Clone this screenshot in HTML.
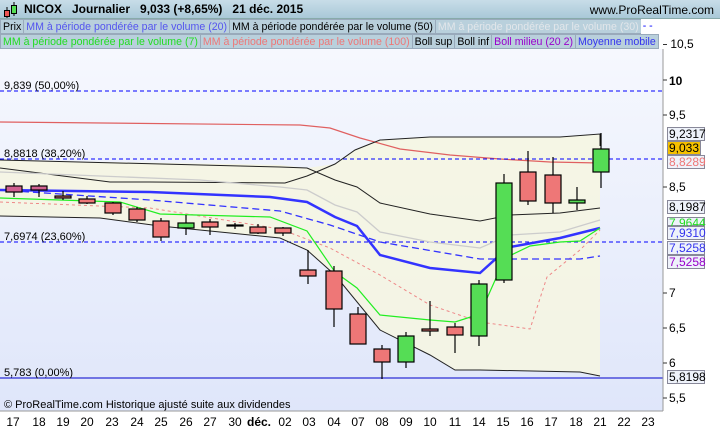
<!DOCTYPE html>
<html><head><meta charset="utf-8"><style>
body{margin:0;width:720px;height:430px;overflow:hidden;font-family:"Liberation Sans",sans-serif;background:#fff;position:relative}
.t{position:absolute;left:0;top:0;width:720px;height:18px;background:linear-gradient(#c8dde8,#a9c8d8);border-bottom:1px solid #8aa}
.row{position:absolute;left:0;height:15px;font-size:10.6px;line-height:14px;white-space:nowrap;display:flex;overflow:hidden}
.row span{flex:none;display:block;background:#b9d0dc;border:1px solid #9ab;padding:0 2px;margin-right:-1px}
</style></head><body>
<div class="t"><span style="position:absolute;left:24px;top:2px;font-size:12px;font-weight:bold">NICOX &nbsp; Journalier &nbsp; 9,033 (+8,65%) &nbsp; 21 déc. 2015</span><span style="position:absolute;right:6px;top:3px;font-size:12px">www.ProRealTime.com</span>
<svg style="position:absolute;left:3px;top:2px" width="16" height="16"><line x1="4" y1="5" x2="4" y2="16" stroke="#000"/><rect x="1.5" y="8.5" width="5" height="6" fill="#e55" stroke="#000"/><line x1="11" y1="0" x2="11" y2="14" stroke="#000"/><rect x="8.5" y="3.5" width="5" height="8" fill="#5d5" stroke="#000"/></svg></div>
<div class="row" style="top:19px;background:#fff;width:664px"><span>Prix</span><span style="color:#55e">MM à période pondérée par le volume (20)</span><span>MM à période pondérée par le volume (50)</span><span style="color:#e2e6ea">MM à période pondérée par le volume (30)</span><span style="color:#00f;background:#fff;border:none">- -</span></div>
<div class="row" style="top:34px;background:#fff;width:664px"><span style="color:#2d2">MM à période pondérée par le volume (7)</span><span style="color:#e77">MM à période pondérée par le volume (100)</span><span>Boll sup</span><span>Boll inf</span><span style="color:#90c">Boll milieu (20 2)</span><span style="color:#33e">Moyenne mobile</span></div>
<div style="position:absolute;left:663px;top:37px;font-size:12px"><span style="display:inline-block;width:4px;height:1px;background:#333;vertical-align:middle"></span> 10,5</div>
<svg style="position:absolute;left:0;top:49px" width="720" height="381" viewBox="0 49 720 381" font-family="Liberation Sans" font-size="11">
<defs><linearGradient id="bg" x1="0" y1="0" x2="0" y2="1"><stop offset="0" stop-color="#f6f8fe"/><stop offset="1" stop-color="#dfe6fa"/></linearGradient></defs>
<rect x="0" y="49" width="663" height="362" fill="url(#bg)"/>
<polygon fill="#f6f6e0" opacity=".85" points="0,160 280,165 307,168 335,164 355,150 380,140 430,137 480,137 560,137 600,134 600,376 580,372 480,370 455,370 430,355 380,330 335,275 307,250 280,238 160,226 100,218 0,216"/>
<g fill="none">
<polyline stroke="#e06060" stroke-width="1.2" points="0,122 300,125 330,128 360,138 400,149 450,155 500,159 550,162 600,163"/>
<line x1="0" y1="91" x2="663" y2="91" stroke="#00f" stroke-dasharray="4,3"/>
<line x1="0" y1="159" x2="663" y2="159" stroke="#00f" stroke-dasharray="4,3"/>
<line x1="0" y1="242" x2="663" y2="242" stroke="#00f" stroke-dasharray="4,3"/>
<line x1="0" y1="378" x2="663" y2="378" stroke="#00c"/>
<polyline stroke="#222" points="0,160 280,167 307,168 335,180 357,187 380,203 430,214 480,221 510,215 560,213 600,208"/>
<polyline stroke="#222" points="0,168 110,182 150,182 285,183 307,176 335,164 355,150 380,140 430,137 480,137 560,137 600,134 600,146"/>
<polyline stroke="#222" points="0,216 100,218 160,226 280,238 307,250 335,275 380,330 430,355 455,370 480,370 580,372 600,376"/>
<polyline stroke="#ccc" stroke-width="1.3" points="0,172 200,180 280,187 307,190 335,205 357,212 380,232 430,242 480,248 510,235 560,232 600,220"/>
<polyline stroke="#e88" stroke-dasharray="3,3" points="0,202 150,208 280,229 330,248 380,275 430,305 480,322 530,329 547,277 580,250 600,230"/>
<polyline stroke="#33f" stroke-width="1.3" stroke-dasharray="7,4" points="0,190 150,200 280,211 330,225 380,242 480,259 580,259 600,256"/>
<polyline stroke="#33f" stroke-width="2.5" points="0,190 150,192 270,197 307,202 335,217 357,226 380,255 430,268 480,273 500,255 510,247 560,238 600,228"/>
<polyline stroke="#2e2" stroke-width="1.2" points="0,198 120,202 160,214 270,217 307,231 335,272 357,288 380,315 430,320 455,322 480,314 505,258 530,246 560,242 580,241 600,228"/>
</g>
<g stroke="#000" stroke-width="1.2">
<line x1="14" y1="183" x2="14" y2="197"/><rect x="6" y="186" width="16" height="6" fill="#d06090"/>
<line x1="39" y1="184" x2="39" y2="197"/><rect x="31" y="186" width="16" height="4" fill="#d06090"/>
<line x1="63" y1="191" x2="63" y2="200"/><rect x="55" y="196" width="16" height="2" fill="#e77"/>
<line x1="87" y1="196" x2="87" y2="204"/><rect x="79" y="199" width="16" height="4" fill="#e77"/>
<line x1="113" y1="202" x2="113" y2="215"/><rect x="105" y="203" width="16" height="10" fill="#e77"/>
<line x1="137" y1="207" x2="137" y2="222"/><rect x="129" y="209" width="16" height="11" fill="#e77"/>
<line x1="161" y1="218" x2="161" y2="241"/><rect x="153" y="221" width="16" height="16" fill="#e77"/>
<line x1="186" y1="215" x2="186" y2="235"/><rect x="178" y="223" width="16" height="5" fill="#5d5"/>
<line x1="210" y1="219" x2="210" y2="235"/><rect x="202" y="222" width="16" height="5" fill="#e77"/>
<line x1="235" y1="223" x2="235" y2="229"/><rect x="227" y="225" width="16" height="1" fill="#000"/>
<line x1="258" y1="224" x2="258" y2="234"/><rect x="250" y="227" width="16" height="6" fill="#e77"/>
<line x1="283" y1="227" x2="283" y2="236"/><rect x="275" y="228" width="16" height="5" fill="#e77"/>
<line x1="308" y1="250" x2="308" y2="284"/><rect x="300" y="270" width="16" height="6" fill="#e77"/>
<line x1="334" y1="266" x2="334" y2="327"/><rect x="326" y="271" width="16" height="38" fill="#e77"/>
<line x1="358" y1="307" x2="358" y2="344"/><rect x="350" y="314" width="16" height="30" fill="#e77"/>
<line x1="382" y1="345" x2="382" y2="379"/><rect x="374" y="349" width="16" height="13" fill="#e77"/>
<line x1="406" y1="332" x2="406" y2="368"/><rect x="398" y="336" width="16" height="26" fill="#5d5"/>
<line x1="430" y1="301" x2="430" y2="336"/><rect x="422" y="329" width="16" height="2" fill="#e77"/>
<line x1="455" y1="323" x2="455" y2="353"/><rect x="447" y="327" width="16" height="8" fill="#e77"/>
<line x1="479" y1="280" x2="479" y2="346"/><rect x="471" y="284" width="16" height="52" fill="#5d5"/>
<line x1="504" y1="174" x2="504" y2="283"/><rect x="496" y="183" width="16" height="97" fill="#5d5"/>
<line x1="528" y1="151" x2="528" y2="205"/><rect x="520" y="172" width="16" height="29" fill="#e77"/>
<line x1="553" y1="157" x2="553" y2="213"/><rect x="545" y="175" width="16" height="28" fill="#e77"/>
<line x1="577" y1="187" x2="577" y2="210"/><rect x="569" y="200" width="16" height="3" fill="#5d5"/>
<line x1="601" y1="133" x2="601" y2="188"/><rect x="593" y="149" width="16" height="23" fill="#5d5"/>
</g>
<g fill="#000"><text x="4" y="89">9,839 (50,00%)</text><text x="4" y="157">8,8818 (38,20%)</text><text x="4" y="240">7,6974 (23,60%)</text><text x="4" y="376">5,783 (0,00%)</text>
<text x="4" y="408" font-size="11">© ProRealTime.com  Historique ajusté suite aux dividendes</text></g>
<rect x="663" y="49" width="57" height="381" fill="#fff"/>
<line x1="663" y1="49" x2="663" y2="411" stroke="#999"/>
<rect x="0" y="411" width="663" height="19" fill="#fff"/>
<line x1="0" y1="411" x2="663" y2="411" stroke="#999"/>
<g stroke="#333">
<line x1="663" y1="80" x2="667" y2="80"/><line x1="663" y1="115" x2="667" y2="115"/><line x1="663" y1="187" x2="667" y2="187"/><line x1="663" y1="293" x2="667" y2="293"/><line x1="663" y1="328" x2="667" y2="328"/><line x1="663" y1="363" x2="667" y2="363"/><line x1="663" y1="398" x2="667" y2="398"/>
</g>
<g font-size="12"><text x="669" y="85" font-weight="bold">10</text><text x="669" y="119">9,5</text><text x="669" y="191">8,5</text><text x="669" y="297">7</text><text x="669" y="332">6,5</text><text x="669" y="367">6</text><text x="669" y="402">5,5</text></g>
<g font-size="12" stroke="#889" stroke-width="1">
<rect x="667.5" y="127.5" width="37" height="13" fill="#eef2fa"/><text x="669" y="138" stroke="none">9,2317</text>
<rect x="667.5" y="155.5" width="37" height="13" fill="#eef2fa"/><text x="669" y="166" stroke="none" fill="#e77">8,8289</text>
<rect x="667.5" y="141.5" width="33" height="13" fill="#f5c000"/><text x="669" y="152" stroke="none">9,033</text>
<rect x="667.5" y="200.5" width="37" height="13" fill="#eef2fa"/><text x="669" y="211" stroke="none">8,1987</text>
<rect x="667.5" y="217.5" width="37" height="8" fill="#eef2fa"/><text x="669" y="227" stroke="none" fill="#2d2">7,9644</text>
<rect x="667.5" y="226.5" width="37" height="13" fill="#eef2fa"/><text x="669" y="237" stroke="none" fill="#33e">7,9310</text>
<rect x="667.5" y="241.5" width="37" height="13" fill="#eef2fa"/><text x="669" y="252" stroke="none" fill="#33e">7,5258</text>
<rect x="667.5" y="255.5" width="37" height="13" fill="#eef2fa"/><text x="669" y="266" stroke="none" fill="#90c">7,5258</text>
<rect x="667.5" y="370.5" width="37" height="13" fill="#eef2fa"/><text x="669" y="381" stroke="none">5,8198</text>
</g>
<g font-size="12" text-anchor="middle">
<text x="13" y="426">17</text><text x="39" y="426">18</text><text x="63" y="426">19</text><text x="87" y="426">20</text><text x="112" y="426">23</text><text x="137" y="426">24</text><text x="161" y="426">25</text><text x="186" y="426">26</text><text x="210" y="426">27</text><text x="235" y="426">30</text><text x="259" y="426" font-weight="bold">déc.</text><text x="285" y="426">02</text><text x="309" y="426">03</text><text x="334" y="426">04</text><text x="358" y="426">07</text><text x="382" y="426">08</text><text x="406" y="426">09</text><text x="430" y="426">10</text><text x="455" y="426">11</text><text x="479" y="426">14</text><text x="503" y="426">15</text><text x="527" y="426">16</text><text x="551" y="426">17</text><text x="576" y="426">18</text><text x="600" y="426">21</text><text x="624" y="426">22</text><text x="648" y="426">23</text>
</g>
</svg>
</body></html>
